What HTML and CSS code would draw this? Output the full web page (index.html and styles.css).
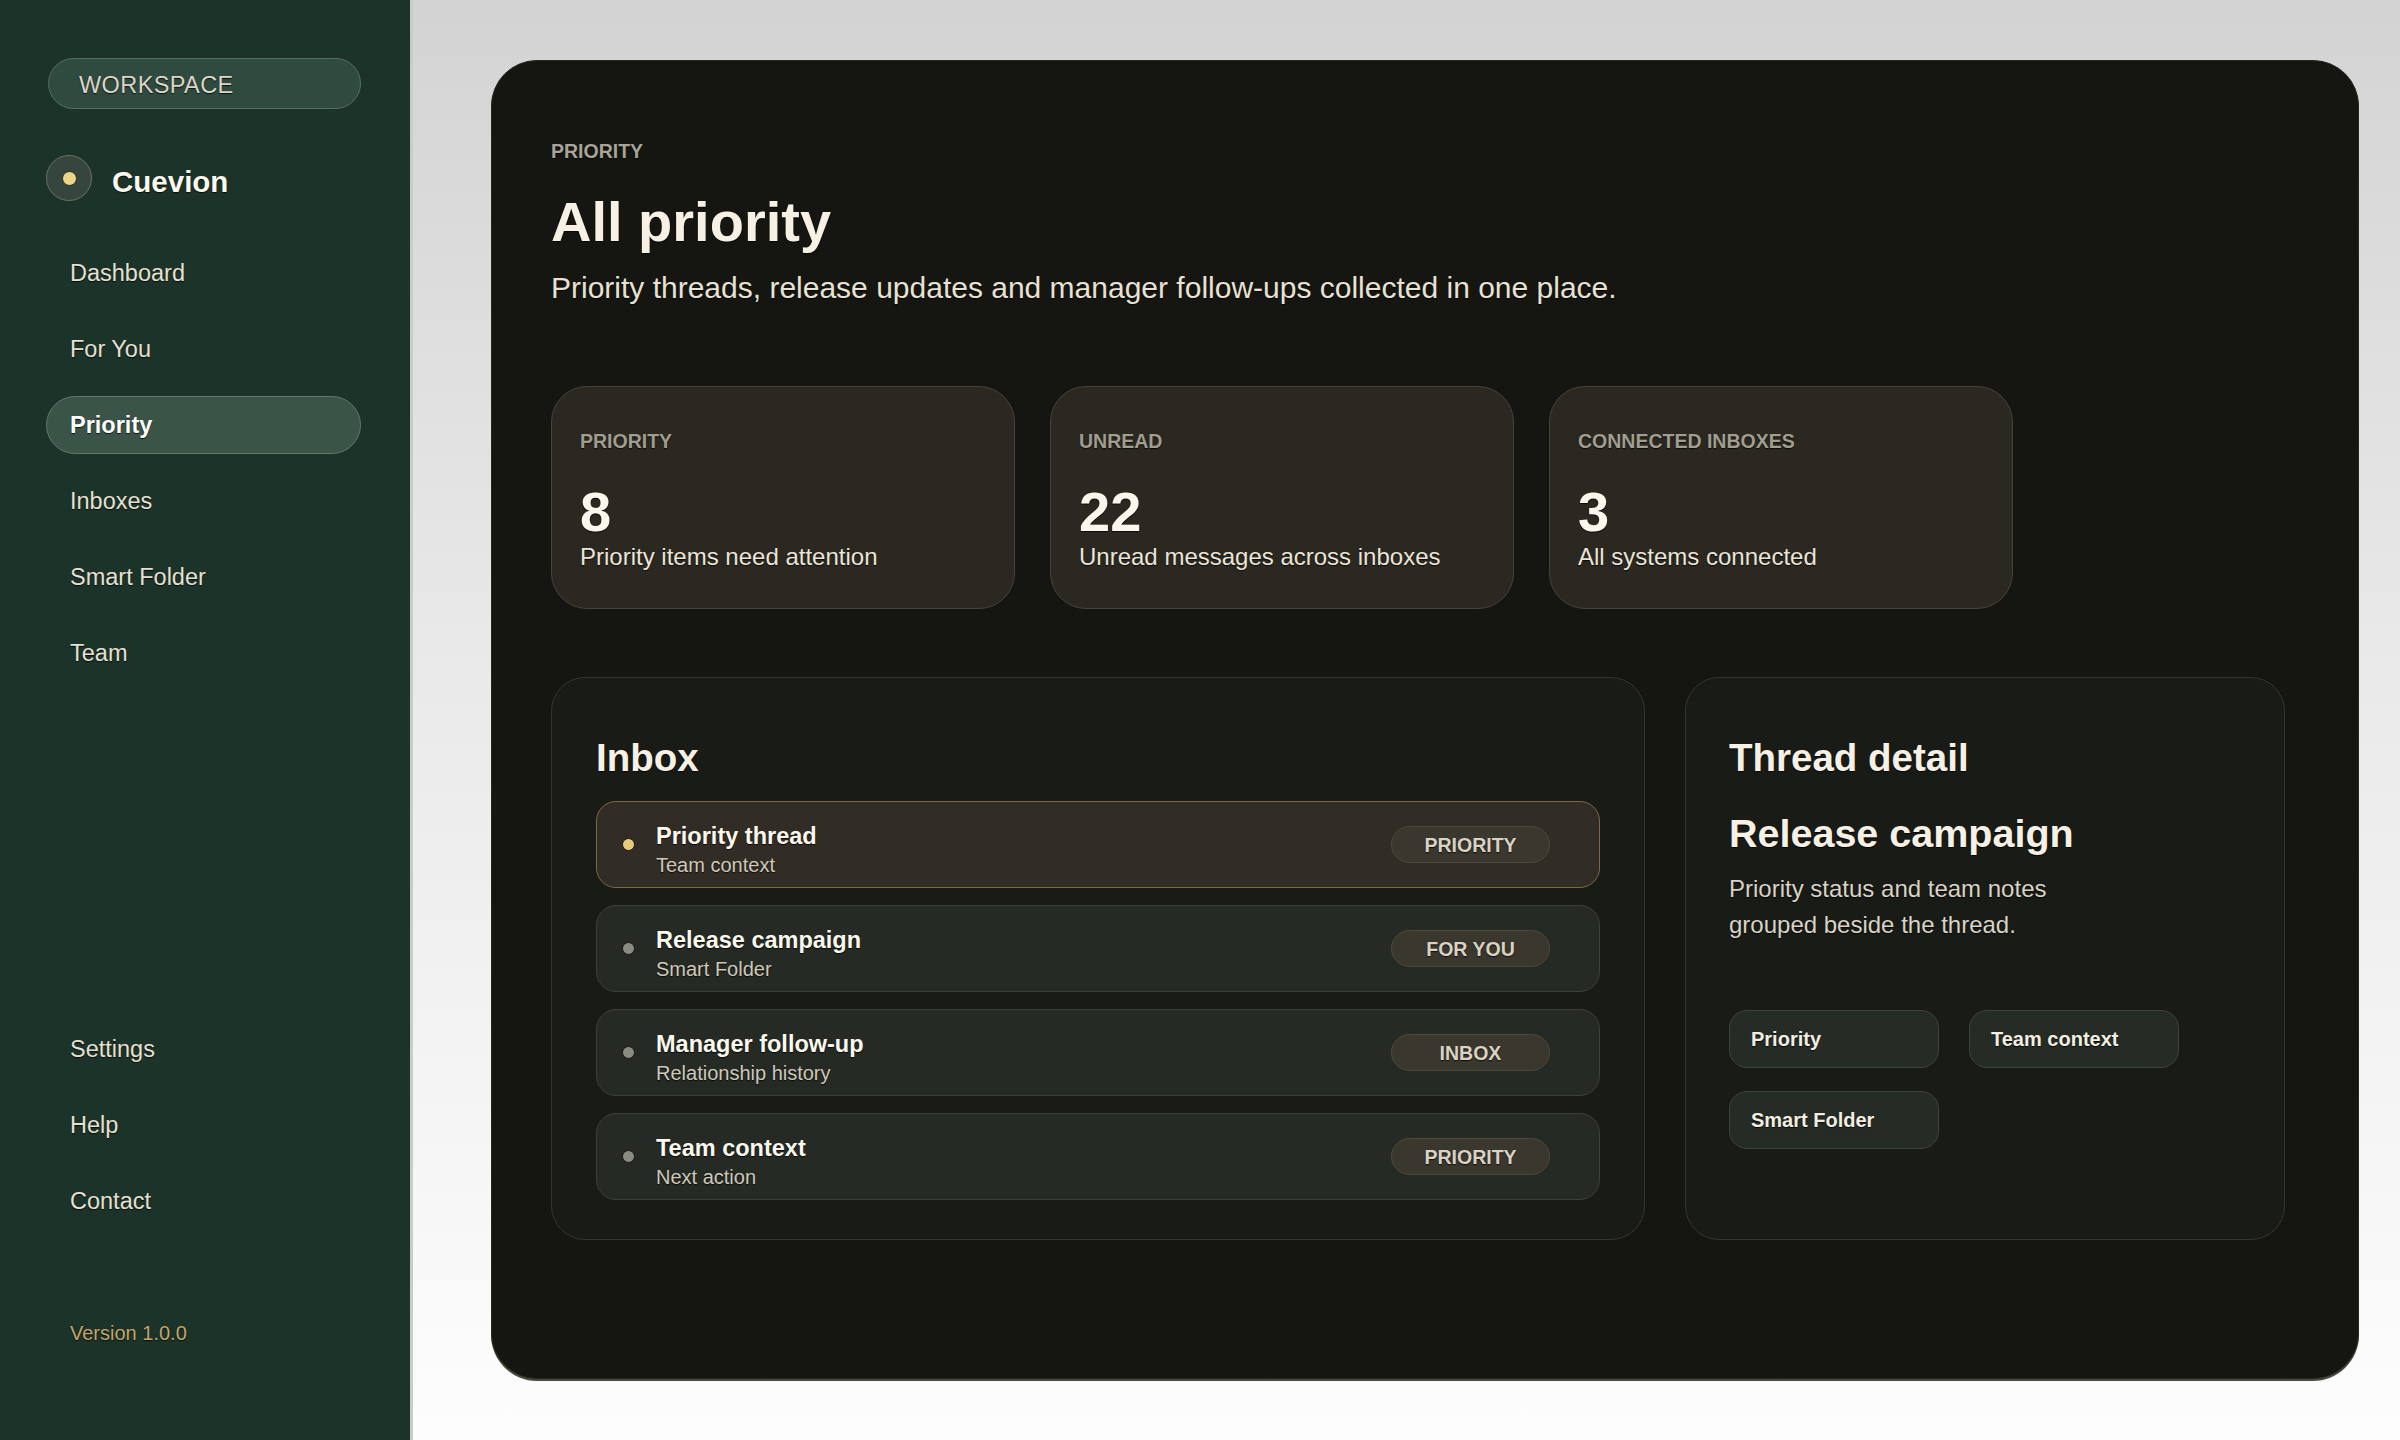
FILE: index.html
```html
<!DOCTYPE html>
<html lang="en">
<head>
    <meta charset="UTF-8">
    <meta name="viewport" content="width=device-width, initial-scale=1.0">
    <title>All priority | Cuevion</title>
    <link rel="stylesheet" href="styles.css">
</head>
<body>
    <div class="app">
        <aside class="sidebar">
            <div class="workspace">WORKSPACE</div>
            <div class="brand">
                <span class="brand-mark"><span class="brand-dot"></span></span>
                <span class="brand-name">Cuevion</span>
            </div>
            <nav class="nav">
                <a class="nav-item" href="#">Dashboard</a>
                <a class="nav-item" href="#">For You</a>
                <a class="nav-item active" href="#">Priority</a>
                <a class="nav-item" href="#">Inboxes</a>
                <a class="nav-item" href="#">Smart Folder</a>
                <a class="nav-item" href="#">Team</a>
            </nav>
            <nav class="nav nav-bottom">
                <a class="nav-item" href="#">Settings</a>
                <a class="nav-item" href="#">Help</a>
                <a class="nav-item" href="#">Contact</a>
            </nav>
            <div class="version">Version 1.0.0</div>
        </aside>

        <main class="main">
            <section class="page">
                <p class="eyebrow">PRIORITY</p>
                <h1>All priority</h1>
                <p class="lead">Priority threads, release updates and manager follow-ups collected in one place.</p>

                <div class="stats">
                    <div class="stat">
                        <div class="stat-label">PRIORITY</div>
                        <div class="stat-value">8</div>
                        <div class="stat-text">Priority items need attention</div>
                    </div>
                    <div class="stat">
                        <div class="stat-label">UNREAD</div>
                        <div class="stat-value">22</div>
                        <div class="stat-text">Unread messages across inboxes</div>
                    </div>
                    <div class="stat">
                        <div class="stat-label">CONNECTED INBOXES</div>
                        <div class="stat-value">3</div>
                        <div class="stat-text">All systems connected</div>
                    </div>
                </div>

                <div class="panels">
                    <div class="panel">
                        <h2 class="panel-title">Inbox</h2>
                        <div class="threads">
                            <div class="thread selected">
                                <span class="dot"></span>
                                <div class="thread-text">
                                    <div class="thread-name">Priority thread</div>
                                    <div class="thread-sub">Team context</div>
                                </div>
                                <span class="tag">PRIORITY</span>
                            </div>
                            <div class="thread">
                                <span class="dot"></span>
                                <div class="thread-text">
                                    <div class="thread-name">Release campaign</div>
                                    <div class="thread-sub">Smart Folder</div>
                                </div>
                                <span class="tag">FOR YOU</span>
                            </div>
                            <div class="thread">
                                <span class="dot"></span>
                                <div class="thread-text">
                                    <div class="thread-name">Manager follow-up</div>
                                    <div class="thread-sub">Relationship history</div>
                                </div>
                                <span class="tag">INBOX</span>
                            </div>
                            <div class="thread">
                                <span class="dot"></span>
                                <div class="thread-text">
                                    <div class="thread-name">Team context</div>
                                    <div class="thread-sub">Next action</div>
                                </div>
                                <span class="tag">PRIORITY</span>
                            </div>
                        </div>
                    </div>

                    <div class="panel detail">
                        <h2 class="panel-title">Thread detail</h2>
                        <h3 class="detail-title">Release campaign</h3>
                        <p class="detail-text">Priority status and team notes grouped beside the thread.</p>
                        <div class="chips">
                            <span class="chip">Priority</span>
                            <span class="chip">Team context</span>
                            <span class="chip">Smart Folder</span>
                        </div>
                    </div>
                </div>
            </section>
        </main>
    </div>
</body>
</html>
```

FILE: styles.css
```css
* {
    box-sizing: border-box;
}
body {
    margin: 0;
    font-family: "Liberation Sans", Arial, sans-serif;
    color: #f5f0e4;
    background: #f4f4f4;
    text-shadow: 0 1px 1px rgba(0, 0, 0, 0.75);
}
.app {
    display: flex;
    height: 100vh;
}

/* sidebar */
.sidebar {
    width: 413px;
    flex-shrink: 0;
    display: flex;
    flex-direction: column;
    padding: 58px 49px 95px 46px;
    background-color: #1c3329;
    border-right: 3px solid #c9ccc9;
}
.workspace {
    height: 51px;
    display: flex;
    align-items: center;
    margin-left: 2px;
    padding: 3px 30px 0;
    border: 1.5px solid #56705f;
    border-radius: 26px;
    background-color: #2f4a3f;
    color: #dcd6c8;
    font-size: 23.5px;
    letter-spacing: 0.4px;
}
.brand {
    display: flex;
    align-items: center;
    gap: 20px;
    margin-top: 46px;
}
.brand-mark {
    width: 46px;
    height: 46px;
    display: flex;
    align-items: center;
    justify-content: center;
    border: 1.5px solid #6b735f;
    border-radius: 50%;
    background-color: #36463f;
}
.brand-dot {
    width: 15px;
    height: 15px;
    border-radius: 50%;
    background-color: #ecd48a;
    border: 1px solid #1d2b23;
}
.brand-name {
    padding-top: 7px;
    font-size: 29.5px;
    font-weight: bold;
    color: #fbf8ee;
}
.nav {
    display: flex;
    flex-direction: column;
    gap: 18px;
    margin-top: 43px;
}
.nav-bottom {
    margin-top: auto;
}
.nav-item {
    height: 58px;
    display: flex;
    align-items: center;
    padding: 1px 23px 0;
    border: 1.5px solid transparent;
    border-radius: 29px;
    color: #e6e0d2;
    font-size: 23.5px;
    text-decoration: none;
}
.nav-item.active {
    background-color: #3b5448;
    border-color: #5e7868;
    color: #ffffff;
    font-weight: bold;
}
.version {
    margin-top: 91px;
    padding-left: 24px;
    line-height: 24px;
    font-size: 20px;
    color: #c4a56a;
}

/* main area */
.main {
    flex: 1;
    padding: 60px 41px 61px 78px;
    background: linear-gradient(#d3d3d3, #e9e9e9 45%, #fdfdfd);
}
.page {
    height: 100%;
    padding: 78px 73px 0 59px;
    background-color: #151612;
    border: 1px solid #25261f;
    border-radius: 46px;
    box-shadow: 0 2px 0 #4a4a3c;
}
.eyebrow {
    margin: 0;
    line-height: 24px;
    font-size: 19.5px;
    font-weight: bold;
    color: #a8a497;
}
h1 {
    margin: 27px 0 0;
    line-height: 64px;
    font-size: 56px;
    font-weight: bold;
    color: #f6f1e4;
}
.lead {
    margin: 16px 0 0;
    line-height: 36px;
    font-size: 30px;
    color: #e8e2d4;
}

/* stat cards */
.stats {
    display: grid;
    grid-template-columns: repeat(3, 464px);
    gap: 35px;
    margin-top: 80px;
}
.stat {
    padding: 42px 28px 36px;
    background-color: #2b2822;
    border: 1px solid #47433a;
    border-radius: 36px;
}
.stat-label {
    line-height: 24px;
    font-size: 19.5px;
    font-weight: bold;
    color: #a19d8f;
}
.stat-value {
    margin-top: 29px;
    line-height: 60px;
    font-size: 56px;
    font-weight: bold;
    color: #fbf7ec;
}
.stat-text {
    line-height: 30px;
    font-size: 24px;
    color: #ebe5d8;
}

/* inbox + detail */
.panels {
    display: grid;
    grid-template-columns: 1fr 600px;
    gap: 40px;
    margin-top: 68px;
}
.panel {
    padding: 57px 44px 39px;
    background-color: #191b17;
    border: 1px solid #34362f;
    border-radius: 34px;
}
.panel-title {
    margin: 0;
    line-height: 46px;
    font-size: 38.5px;
    font-weight: bold;
    color: #f6f1e4;
}
.threads {
    display: flex;
    flex-direction: column;
    gap: 17px;
    margin-top: 20px;
}
.thread {
    height: 87px;
    display: flex;
    align-items: center;
    padding: 0 49px 0 25px;
    background-color: #252a24;
    border: 1.5px solid #3b4137;
    border-radius: 20px;
}
.thread.selected {
    background-color: #312c25;
    border-color: #7b6a42;
}
.dot {
    width: 13px;
    height: 13px;
    flex-shrink: 0;
    border-radius: 50%;
    background-color: #8a8a80;
    border: 1px solid #15170f;
}
.thread.selected .dot {
    background-color: #e6c97c;
}
.thread-text {
    margin-left: 21px;
    padding-top: 10px;
}
.thread-name {
    line-height: 26px;
    font-size: 23.5px;
    font-weight: bold;
    color: #fbf8ee;
}
.thread-sub {
    margin-top: 4px;
    line-height: 24px;
    font-size: 20px;
    color: #cfc9bb;
}
.tag {
    width: 159px;
    height: 37px;
    display: flex;
    align-items: center;
    justify-content: center;
    margin-left: auto;
    padding-top: 2px;
    background-color: #3a372e;
    border: 1px solid #4d493e;
    border-radius: 19px;
    font-size: 19.5px;
    font-weight: bold;
    color: #dad3c3;
}
.detail {
    padding-left: 43px;
}
.detail-title {
    margin: 28px 0 0;
    line-height: 48px;
    font-size: 39.5px;
    font-weight: bold;
    color: #f6f1e4;
}
.detail-text {
    max-width: 360px;
    margin: 14px 0 0;
    line-height: 36px;
    font-size: 24px;
    color: #d9d3c5;
}
.chips {
    display: grid;
    grid-template-columns: repeat(2, 210px);
    column-gap: 30px;
    row-gap: 23px;
    margin-top: 67px;
}
.chip {
    height: 58px;
    display: flex;
    align-items: center;
    padding: 0 21px;
    background-color: #252b25;
    border: 1.5px solid #3f443b;
    border-radius: 18px;
    font-size: 20px;
    font-weight: bold;
    color: #f2eee2;
}
```
